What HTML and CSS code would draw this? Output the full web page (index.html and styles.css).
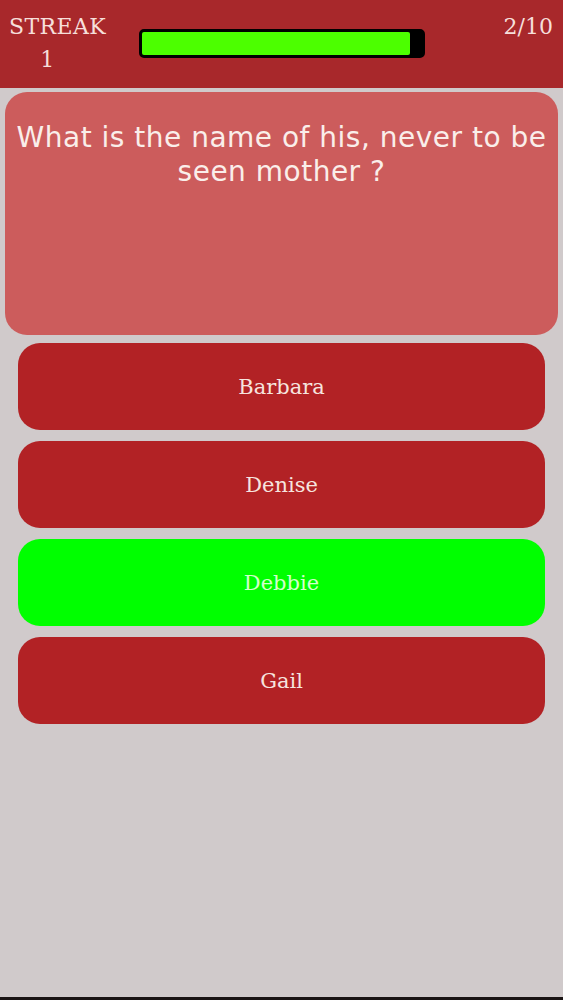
FILE: index.html
```html
<!DOCTYPE html>
<html lang="en">
<head>
    <meta charset="UTF-8">
    <meta name="viewport" content="width=device-width, initial-scale=1.0">
    <title>Quiz</title>
    <link rel="stylesheet" href="styles.css">
</head>
<body>
    <div class="screen">
        <div class="top-bar">
            <div class="streak">
                <span>STREAK</span>
                <span class="streak-num">1</span>
            </div>
            <div class="timer">
                <div class="timer-fill" style="width: 95.7%"></div>
            </div>
            <div class="count">2/10</div>
        </div>

        <div class="content">
            <div class="question">What is the name of his, never to be seen mother ?</div>

            <div class="answers">
                <button class="answer">Barbara</button>
                <button class="answer">Denise</button>
                <button class="answer correct">Debbie</button>
                <button class="answer">Gail</button>
            </div>
        </div>
    </div>
</body>
</html>
```

FILE: styles.css
```css
body {
    margin: 0;
    background-color: #d0cacb;
    font-family: "DejaVu Serif", serif;
}
.screen {
    display: flex;
    flex-direction: column;
    height: 997px;
    border-bottom: 3px solid #1a1414;
}
.top-bar {
    display: flex;
    align-items: flex-start;
    height: 88px;
    background-color: #a8282b;
    color: #f6dfda;
    font-size: 22px;
}
.streak {
    display: flex;
    flex-direction: column;
    align-items: center;
    padding: 10px 0 0 9px;
    line-height: 33px;
    letter-spacing: 0.4px;
}
.streak-num {
    margin-right: 20px;
}
.timer {
    flex: 1;
    height: 23px;
    margin: 29px 79px 0 33px;
    background-color: #000;
    border: 3px solid #000;
    border-radius: 5px;
}
.timer-fill {
    height: 100%;
    background-color: #4cff00;
    border-radius: 2px;
}
.count {
    padding: 10px 10px 0 0;
    line-height: 33px;
}
.content {
    flex: 1;
    padding: 4px 5px 0;
}
.question {
    height: 208px;
    padding: 29px 6px 6px;
    background-color: #cc5c5c;
    border-radius: 22px;
    color: #faeeea;
    font-family: "DejaVu Sans", sans-serif;
    font-size: 28px;
    line-height: 34px;
    letter-spacing: 0.5px;
    text-align: center;
}
.answers {
    display: flex;
    flex-direction: column;
    gap: 11px;
    margin: 8px 13px 0;
}
.answer {
    height: 87px;
    border: none;
    border-radius: 22px;
    background-color: #b22225;
    color: #f6e4df;
    font-family: "DejaVu Serif", serif;
    font-size: 21px;
    cursor: pointer;
}
.answer.correct {
    background-color: #00ff00;
    color: #d4ffcc;
}
```
